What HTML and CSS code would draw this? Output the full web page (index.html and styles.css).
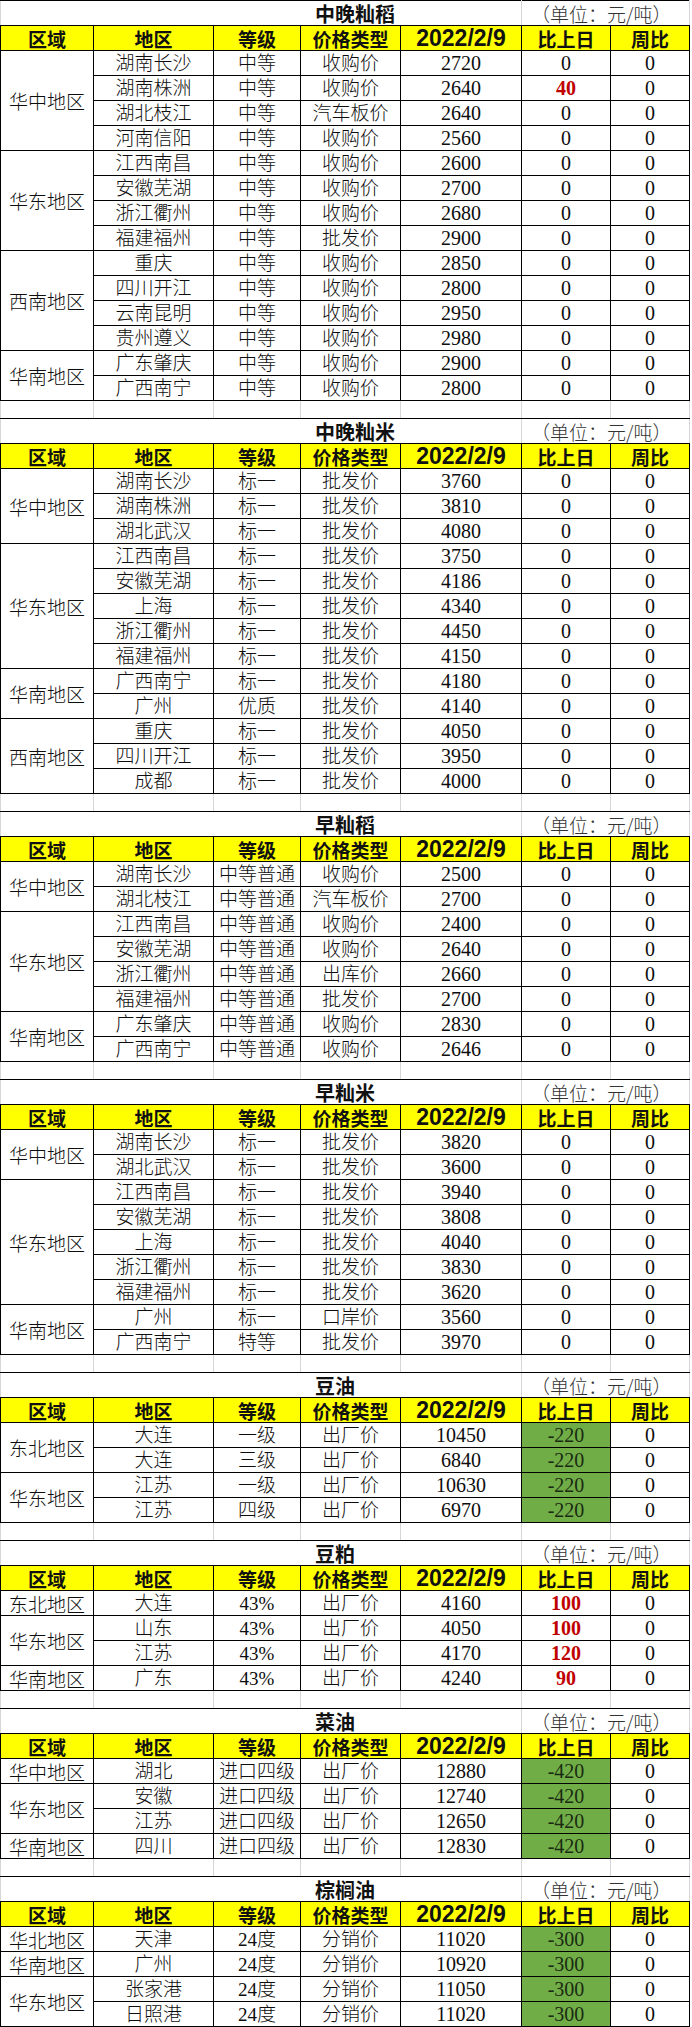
FILE: index.html
```html
<!DOCTYPE html>
<html lang="zh">
<head>
<meta charset="utf-8">
<title>价格表</title>
<link rel="stylesheet" href="styles.css">
</head>
<body>
<table class="sheet">
<colgroup>
<col class="c1"><col class="c2"><col class="c3"><col class="c4"><col class="c5"><col class="c6"><col class="c7">
</colgroup>
<tbody>
<!-- 中晚籼稻 -->
<tr class="ttl"><td colspan="5" class="title">中晚籼稻</td><td colspan="2" class="unit">（单位：元/吨）</td></tr>
<tr class="hdr"><td>区域</td><td>地区</td><td>等级</td><td>价格类型</td><td class="date">2022/2/9</td><td>比上日</td><td>周比</td></tr>
<tr><td class="reg" rowspan="4">华中地区</td><td>湖南长沙</td><td>中等</td><td>收购价</td><td class="n">2720</td><td class="n">0</td><td class="n">0</td></tr>
<tr><td>湖南株洲</td><td>中等</td><td>收购价</td><td class="n">2640</td><td class="n up">40</td><td class="n">0</td></tr>
<tr><td>湖北枝江</td><td>中等</td><td>汽车板价</td><td class="n">2640</td><td class="n">0</td><td class="n">0</td></tr>
<tr><td>河南信阳</td><td>中等</td><td>收购价</td><td class="n">2560</td><td class="n">0</td><td class="n">0</td></tr>
<tr><td class="reg" rowspan="4">华东地区</td><td>江西南昌</td><td>中等</td><td>收购价</td><td class="n">2600</td><td class="n">0</td><td class="n">0</td></tr>
<tr><td>安徽芜湖</td><td>中等</td><td>收购价</td><td class="n">2700</td><td class="n">0</td><td class="n">0</td></tr>
<tr><td>浙江衢州</td><td>中等</td><td>收购价</td><td class="n">2680</td><td class="n">0</td><td class="n">0</td></tr>
<tr><td>福建福州</td><td>中等</td><td>批发价</td><td class="n">2900</td><td class="n">0</td><td class="n">0</td></tr>
<tr><td class="reg" rowspan="4">西南地区</td><td>重庆</td><td>中等</td><td>收购价</td><td class="n">2850</td><td class="n">0</td><td class="n">0</td></tr>
<tr><td>四川开江</td><td>中等</td><td>收购价</td><td class="n">2800</td><td class="n">0</td><td class="n">0</td></tr>
<tr><td>云南昆明</td><td>中等</td><td>收购价</td><td class="n">2950</td><td class="n">0</td><td class="n">0</td></tr>
<tr><td>贵州遵义</td><td>中等</td><td>收购价</td><td class="n">2980</td><td class="n">0</td><td class="n">0</td></tr>
<tr><td class="reg" rowspan="2">华南地区</td><td>广东肇庆</td><td>中等</td><td>收购价</td><td class="n">2900</td><td class="n">0</td><td class="n">0</td></tr>
<tr><td>广西南宁</td><td>中等</td><td>收购价</td><td class="n">2800</td><td class="n">0</td><td class="n">0</td></tr>
<tr class="gap"><td></td><td></td><td></td><td></td><td></td><td></td><td></td></tr>
<!-- 中晚籼米 -->
<tr class="ttl"><td colspan="5" class="title">中晚籼米</td><td colspan="2" class="unit">（单位：元/吨）</td></tr>
<tr class="hdr"><td>区域</td><td>地区</td><td>等级</td><td>价格类型</td><td class="date">2022/2/9</td><td>比上日</td><td>周比</td></tr>
<tr><td class="reg" rowspan="3">华中地区</td><td>湖南长沙</td><td>标一</td><td>批发价</td><td class="n">3760</td><td class="n">0</td><td class="n">0</td></tr>
<tr><td>湖南株洲</td><td>标一</td><td>批发价</td><td class="n">3810</td><td class="n">0</td><td class="n">0</td></tr>
<tr><td>湖北武汉</td><td>标一</td><td>批发价</td><td class="n">4080</td><td class="n">0</td><td class="n">0</td></tr>
<tr><td class="reg" rowspan="5">华东地区</td><td>江西南昌</td><td>标一</td><td>批发价</td><td class="n">3750</td><td class="n">0</td><td class="n">0</td></tr>
<tr><td>安徽芜湖</td><td>标一</td><td>批发价</td><td class="n">4186</td><td class="n">0</td><td class="n">0</td></tr>
<tr><td>上海</td><td>标一</td><td>批发价</td><td class="n">4340</td><td class="n">0</td><td class="n">0</td></tr>
<tr><td>浙江衢州</td><td>标一</td><td>批发价</td><td class="n">4450</td><td class="n">0</td><td class="n">0</td></tr>
<tr><td>福建福州</td><td>标一</td><td>批发价</td><td class="n">4150</td><td class="n">0</td><td class="n">0</td></tr>
<tr><td class="reg" rowspan="2">华南地区</td><td>广西南宁</td><td>标一</td><td>批发价</td><td class="n">4180</td><td class="n">0</td><td class="n">0</td></tr>
<tr><td>广州</td><td>优质</td><td>批发价</td><td class="n">4140</td><td class="n">0</td><td class="n">0</td></tr>
<tr><td class="reg" rowspan="3">西南地区</td><td>重庆</td><td>标一</td><td>批发价</td><td class="n">4050</td><td class="n">0</td><td class="n">0</td></tr>
<tr><td>四川开江</td><td>标一</td><td>批发价</td><td class="n">3950</td><td class="n">0</td><td class="n">0</td></tr>
<tr><td>成都</td><td>标一</td><td>批发价</td><td class="n">4000</td><td class="n">0</td><td class="n">0</td></tr>
<tr class="gap"><td></td><td></td><td></td><td></td><td></td><td></td><td></td></tr>
<!-- 早籼稻 -->
<tr class="ttl"><td colspan="5" class="title">早籼稻</td><td colspan="2" class="unit">（单位：元/吨）</td></tr>
<tr class="hdr"><td>区域</td><td>地区</td><td>等级</td><td>价格类型</td><td class="date">2022/2/9</td><td>比上日</td><td>周比</td></tr>
<tr><td class="reg" rowspan="2">华中地区</td><td>湖南长沙</td><td>中等普通</td><td>收购价</td><td class="n">2500</td><td class="n">0</td><td class="n">0</td></tr>
<tr><td>湖北枝江</td><td>中等普通</td><td>汽车板价</td><td class="n">2700</td><td class="n">0</td><td class="n">0</td></tr>
<tr><td class="reg" rowspan="4">华东地区</td><td>江西南昌</td><td>中等普通</td><td>收购价</td><td class="n">2400</td><td class="n">0</td><td class="n">0</td></tr>
<tr><td>安徽芜湖</td><td>中等普通</td><td>收购价</td><td class="n">2640</td><td class="n">0</td><td class="n">0</td></tr>
<tr><td>浙江衢州</td><td>中等普通</td><td>出库价</td><td class="n">2660</td><td class="n">0</td><td class="n">0</td></tr>
<tr><td>福建福州</td><td>中等普通</td><td>批发价</td><td class="n">2700</td><td class="n">0</td><td class="n">0</td></tr>
<tr><td class="reg" rowspan="2">华南地区</td><td>广东肇庆</td><td>中等普通</td><td>收购价</td><td class="n">2830</td><td class="n">0</td><td class="n">0</td></tr>
<tr><td>广西南宁</td><td>中等普通</td><td>收购价</td><td class="n">2646</td><td class="n">0</td><td class="n">0</td></tr>
<tr class="gap"><td></td><td></td><td></td><td></td><td></td><td></td><td></td></tr>
<!-- 早籼米 -->
<tr class="ttl"><td colspan="5" class="title">早籼米</td><td colspan="2" class="unit">（单位：元/吨）</td></tr>
<tr class="hdr"><td>区域</td><td>地区</td><td>等级</td><td>价格类型</td><td class="date">2022/2/9</td><td>比上日</td><td>周比</td></tr>
<tr><td class="reg" rowspan="2">华中地区</td><td>湖南长沙</td><td>标一</td><td>批发价</td><td class="n">3820</td><td class="n">0</td><td class="n">0</td></tr>
<tr><td>湖北武汉</td><td>标一</td><td>批发价</td><td class="n">3600</td><td class="n">0</td><td class="n">0</td></tr>
<tr><td class="reg" rowspan="5">华东地区</td><td>江西南昌</td><td>标一</td><td>批发价</td><td class="n">3940</td><td class="n">0</td><td class="n">0</td></tr>
<tr><td>安徽芜湖</td><td>标一</td><td>批发价</td><td class="n">3808</td><td class="n">0</td><td class="n">0</td></tr>
<tr><td>上海</td><td>标一</td><td>批发价</td><td class="n">4040</td><td class="n">0</td><td class="n">0</td></tr>
<tr><td>浙江衢州</td><td>标一</td><td>批发价</td><td class="n">3830</td><td class="n">0</td><td class="n">0</td></tr>
<tr><td>福建福州</td><td>标一</td><td>批发价</td><td class="n">3620</td><td class="n">0</td><td class="n">0</td></tr>
<tr><td class="reg" rowspan="2">华南地区</td><td>广州</td><td>标一</td><td>口岸价</td><td class="n">3560</td><td class="n">0</td><td class="n">0</td></tr>
<tr><td>广西南宁</td><td>特等</td><td>批发价</td><td class="n">3970</td><td class="n">0</td><td class="n">0</td></tr>
<tr class="gap"><td></td><td></td><td></td><td></td><td></td><td></td><td></td></tr>
<!-- 豆油 -->
<tr class="ttl"><td colspan="5" class="title">豆油</td><td colspan="2" class="unit">（单位：元/吨）</td></tr>
<tr class="hdr"><td>区域</td><td>地区</td><td>等级</td><td>价格类型</td><td class="date">2022/2/9</td><td>比上日</td><td>周比</td></tr>
<tr><td class="reg" rowspan="2">东北地区</td><td>大连</td><td>一级</td><td>出厂价</td><td class="n">10450</td><td class="n down">-220</td><td class="n">0</td></tr>
<tr><td>大连</td><td>三级</td><td>出厂价</td><td class="n">6840</td><td class="n down">-220</td><td class="n">0</td></tr>
<tr><td class="reg" rowspan="2">华东地区</td><td>江苏</td><td>一级</td><td>出厂价</td><td class="n">10630</td><td class="n down">-220</td><td class="n">0</td></tr>
<tr><td>江苏</td><td>四级</td><td>出厂价</td><td class="n">6970</td><td class="n down">-220</td><td class="n">0</td></tr>
<tr class="gap"><td></td><td></td><td></td><td></td><td></td><td></td><td></td></tr>
<!-- 豆粕 -->
<tr class="ttl"><td colspan="5" class="title">豆粕</td><td colspan="2" class="unit">（单位：元/吨）</td></tr>
<tr class="hdr"><td>区域</td><td>地区</td><td>等级</td><td>价格类型</td><td class="date">2022/2/9</td><td>比上日</td><td>周比</td></tr>
<tr><td class="reg">东北地区</td><td>大连</td><td>43%</td><td>出厂价</td><td class="n">4160</td><td class="n up">100</td><td class="n">0</td></tr>
<tr><td class="reg" rowspan="2">华东地区</td><td>山东</td><td>43%</td><td>出厂价</td><td class="n">4050</td><td class="n up">100</td><td class="n">0</td></tr>
<tr><td>江苏</td><td>43%</td><td>出厂价</td><td class="n">4170</td><td class="n up">120</td><td class="n">0</td></tr>
<tr><td class="reg">华南地区</td><td>广东</td><td>43%</td><td>出厂价</td><td class="n">4240</td><td class="n up">90</td><td class="n">0</td></tr>
<tr class="gap"><td></td><td></td><td></td><td></td><td></td><td></td><td></td></tr>
<!-- 菜油 -->
<tr class="ttl"><td colspan="5" class="title">菜油</td><td colspan="2" class="unit">（单位：元/吨）</td></tr>
<tr class="hdr"><td>区域</td><td>地区</td><td>等级</td><td>价格类型</td><td class="date">2022/2/9</td><td>比上日</td><td>周比</td></tr>
<tr><td class="reg">华中地区</td><td>湖北</td><td>进口四级</td><td>出厂价</td><td class="n">12880</td><td class="n down">-420</td><td class="n">0</td></tr>
<tr><td class="reg" rowspan="2">华东地区</td><td>安徽</td><td>进口四级</td><td>出厂价</td><td class="n">12740</td><td class="n down">-420</td><td class="n">0</td></tr>
<tr><td>江苏</td><td>进口四级</td><td>出厂价</td><td class="n">12650</td><td class="n down">-420</td><td class="n">0</td></tr>
<tr><td class="reg">华南地区</td><td>四川</td><td>进口四级</td><td>出厂价</td><td class="n">12830</td><td class="n down">-420</td><td class="n">0</td></tr>
<tr class="gap"><td></td><td></td><td></td><td></td><td></td><td></td><td></td></tr>
<!-- 棕榈油 -->
<tr class="ttl"><td colspan="5" class="title">棕榈油</td><td colspan="2" class="unit">（单位：元/吨）</td></tr>
<tr class="hdr"><td>区域</td><td>地区</td><td>等级</td><td>价格类型</td><td class="date">2022/2/9</td><td>比上日</td><td>周比</td></tr>
<tr><td class="reg">华北地区</td><td>天津</td><td>24度</td><td>分销价</td><td class="n">11020</td><td class="n down">-300</td><td class="n">0</td></tr>
<tr><td class="reg">华南地区</td><td>广州</td><td>24度</td><td>分销价</td><td class="n">10920</td><td class="n down">-300</td><td class="n">0</td></tr>
<tr><td class="reg" rowspan="2">华东地区</td><td>张家港</td><td>24度</td><td>分销价</td><td class="n">11050</td><td class="n down">-300</td><td class="n">0</td></tr>
<tr><td>日照港</td><td>24度</td><td>分销价</td><td class="n">11020</td><td class="n down">-300</td><td class="n">0</td></tr>
</tbody>
</table>
</body>
</html>
```
FILE: styles.css
```css
html, body {
  margin: 0;
  padding: 0;
  background: #ffffff;
}

.sheet {
  border-collapse: collapse;
  table-layout: fixed;
  width: 690px;
  border-top: 1px solid #d6d6d6;
  font-family: "Liberation Serif", "Noto Sans CJK SC", serif;
  font-weight: 300;
  color: #0d0d0d;
}

.c1 { width: 93px; }
.c2 { width: 120px; }
.c3 { width: 87px; }
.c4 { width: 100px; }
.c5 { width: 121px; }
.c6 { width: 89px; }
.c7 { width: 79px; }

.sheet td {
  border: 1px solid #000;
  padding: 0;
  text-align: center;
  vertical-align: middle;
  font-size: 19px;
  line-height: 23px;
  white-space: nowrap;
}

.sheet tr {
  height: 25px;
}

.sheet td.n {
  font-size: 20px;
}

.sheet td.reg {
  font-family: "Noto Sans CJK SC", sans-serif;
}

/* title rows */
.sheet .ttl td {
  border-left: 1px solid #d6d6d6;
  border-right: 1px solid #d6d6d6;
  border-bottom: 1px solid #000;
  font-family: "Noto Sans CJK SC", sans-serif;
}

.sheet .ttl td.title {
  font-weight: 700;
  font-size: 20px;
  color: #111;
  text-align: left;
  padding-left: 314px;
}

.sheet .ttl td.unit {
  font-size: 19px;
  color: #333;
  text-align: left;
  padding-left: 9px;
}

/* header rows */
.sheet .hdr td {
  background: #ffff00;
  font-family: "Noto Sans CJK SC", sans-serif;
  font-weight: 700;
  color: #111;
}

.sheet .hdr td.date {
  font-family: "Liberation Sans", "Noto Sans CJK SC", sans-serif;
  font-weight: 700;
  font-size: 23px;
}

/* spacer rows between tables */
.sheet tr.gap {
  height: 18px;
}

.sheet .gap td {
  border-left: 1px solid #d6d6d6;
  border-right: 1px solid #d6d6d6;
  border-bottom: 1px solid #000;
  line-height: 16px;
}

/* change values */
.sheet td.up {
  color: #c00000;
  font-weight: 700;
}

.sheet td.down {
  background: #70ad47;
  color: #1a2a12;
}
```
